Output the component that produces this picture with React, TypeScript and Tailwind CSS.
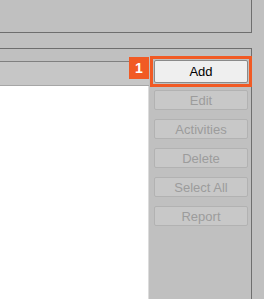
import React from "react";

const disabledButtons = ["Edit", "Activities", "Delete", "Select All", "Report"];

export default function App() {
  return (
    <div
      className="relative w-[264px] h-[299px] bg-[#c0c0c0] flex flex-col overflow-hidden"
      style={{ fontFamily: '"Liberation Sans", Arial, sans-serif' }}
    >
      {/* top panel */}
      <div className="h-[33px] w-[252px] shrink-0 border-b border-r border-[#6e6e6e]" />
      <div className="h-[15px] shrink-0" />

      {/* main panel */}
      <div className="flex-1 w-[252px] border-t border-r border-[#6e6e6e] flex">
        {/* list side */}
        <div className="w-[149px] flex flex-col">
          <div className="h-[13px] shrink-0 border-b border-[#808080]" />
          <div className="h-[24px] shrink-0 bg-[#c6c6c6] border-b border-[#a6a6a6]" />
          <div className="flex-1 bg-white border-r border-[#dcdcdc]" />
        </div>

        {/* action buttons */}
        <div className="flex-1 flex flex-col pl-[5px] pt-[11px]">
          <button className="w-[94px] h-[23px] rounded-[2px] border border-[#8a8a8a] bg-[#efefef] text-[13px] text-black leading-none">
            Add
          </button>
          <div className="flex flex-col gap-[9px] mt-[7px]">
            {disabledButtons.map((label) => (
              <button
                key={label}
                disabled
                className="w-[94px] h-[20px] rounded-[2px] border border-[#b2b2b2] bg-[#c8c8c8] text-[13px] text-[#9c9c9c] leading-none"
              >
                {label}
              </button>
            ))}
          </div>
        </div>
      </div>

      {/* highlight overlay */}
      <div className="absolute left-[150px] top-[56px] w-[102px] h-[31px] border-[3px] border-[#f15a24] pointer-events-none" />
      <div className="absolute left-[129px] top-[57px] w-[20px] h-[22px] bg-[#f15a24] text-white text-[14px] font-bold flex items-center justify-center">
        1
      </div>
    </div>
  );
}
